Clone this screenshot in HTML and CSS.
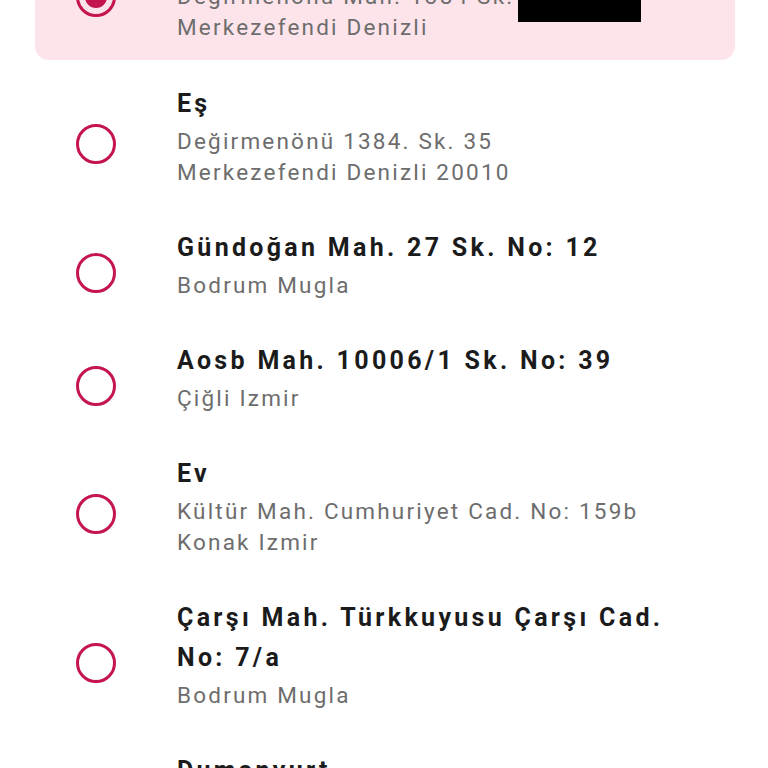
FILE: index.html
```html
<!DOCTYPE html>
<html lang="tr">
<head>
<meta charset="utf-8">
<title>Adresler</title>
<link rel="stylesheet" href="styles.css">
</head>
<body>
<ul class="address-list">
  <li class="address selected">
    <span class="radio checked"></span>
    <div class="address-text">
      <div class="title">İş</div>
      <div class="sub">Değirmenönü Mah. 1384 Sk. No: 35<br>Merkezefendi Denizli</div>
    </div>
    <span class="redact"></span>
  </li>
  <li class="address">
    <span class="radio"></span>
    <div class="address-text">
      <div class="title">Eş</div>
      <div class="sub">Değirmenönü 1384. Sk. 35<br>Merkezefendi Denizli 20010</div>
    </div>
  </li>
  <li class="address">
    <span class="radio"></span>
    <div class="address-text">
      <div class="title">Gündoğan Mah. 27 Sk. No: 12</div>
      <div class="sub">Bodrum Mugla</div>
    </div>
  </li>
  <li class="address">
    <span class="radio"></span>
    <div class="address-text">
      <div class="title">Aosb Mah. 10006/1 Sk. No: 39</div>
      <div class="sub">Çiğli Izmir</div>
    </div>
  </li>
  <li class="address">
    <span class="radio"></span>
    <div class="address-text">
      <div class="title">Ev</div>
      <div class="sub">Kültür Mah. Cumhuriyet Cad. No: 159b<br>Konak Izmir</div>
    </div>
  </li>
  <li class="address">
    <span class="radio"></span>
    <div class="address-text">
      <div class="title">Çarşı Mah. Türkkuyusu Çarşı Cad.<br>No: 7/a</div>
      <div class="sub">Bodrum Mugla</div>
    </div>
  </li>
  <li class="address">
    <span class="radio"></span>
    <div class="address-text">
      <div class="title">Dumanyurt</div>
      <div class="sub">Bodrum Mugla</div>
    </div>
  </li>
</ul>
</body>
</html>
```

FILE: styles.css
```css
html, body {
  margin: 0;
  padding: 0;
  background: #ffffff;
  overflow: hidden;
}

body {
  font-family: Roboto, "Noto Sans", "Liberation Sans", sans-serif;
}

.address-list {
  list-style: none;
  margin: -67px 33px 0 35px;
  padding: 0;
  display: flex;
  flex-direction: column;
}

.address {
  display: flex;
  align-items: center;
  padding: 12px 0 28px 41px;
  gap: 61px;
  position: relative;
}

.address.selected {
  background: #fde4ea;
  border-radius: 14px;
  padding-top: 6px;
  padding-bottom: 17px;
  margin-bottom: 12px;
}

.radio {
  flex: 0 0 auto;
  width: 40px;
  height: 40px;
  box-sizing: border-box;
  border: 3px solid #c5154f;
  border-radius: 50%;
  position: relative;
  top: 8px;
}

.address.selected .radio {
  top: 6px;
}

.radio.checked::after {
  content: "";
  position: absolute;
  left: 6px;
  top: 6px;
  width: 22px;
  height: 22px;
  border-radius: 50%;
  background: #c5154f;
}

.address-text {
  display: flex;
  flex-direction: column;
  gap: 2px;
  white-space: nowrap;
}

.title {
  font-size: 25px;
  line-height: 40px;
  font-weight: 700;
  letter-spacing: 3.3px;
  color: #1b1b1b;
}

.sub {
  font-size: 22.5px;
  line-height: 31px;
  letter-spacing: 2.2px;
  color: #6d6d6d;
}

.redact {
  position: absolute;
  left: 483px;
  top: 39px;
  width: 123px;
  height: 50px;
  background: #000;
}
```
